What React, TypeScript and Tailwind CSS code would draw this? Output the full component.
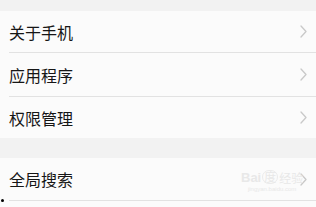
import React from "react";

function Chevron() {
  return (
    <svg width="7" height="13" viewBox="0 0 7 13" className="shrink-0">
      <path d="M1 1 L6 6.5 L1 12" fill="none" stroke="#c9c9c9" strokeWidth="1.3" strokeLinecap="round" strokeLinejoin="round" />
    </svg>
  );
}

function Row({ label, h, divider }: { label: string; h: string; divider?: boolean }) {
  return (
    <div className="bg-[#fbfbfb]">
      <div className={`flex items-center justify-between pl-[9px] pr-[9px] ${h}`}>
        <span className="text-[16px] leading-none text-[#161616]">{label}</span>
        <Chevron />
      </div>
      {divider && (
        <div className="pl-[9px]">
          <div className="h-px bg-[#e2e2e2]" />
        </div>
      )}
    </div>
  );
}

export default function App() {
  return (
    <div
      className="relative w-[316px] h-[207px] overflow-hidden bg-[#fbfbfb]"
      style={{ fontFamily: '"Noto Sans CJK SC", "Noto Sans", sans-serif' }}
    >
      <div className="h-[11px] bg-[#f2f2f2]" />
      <Row label="关于手机" h="h-[41px]" divider />
      <Row label="应用程序" h="h-[43px]" divider />
      <Row label="权限管理" h="h-[41px]" />
      <div className="h-[20px] bg-[#f2f2f2]" />
      <Row label="全局搜索" h="h-[42px]" divider />
      <div className="absolute left-[1px] top-[199px] w-[3px] h-[3px] rounded-full bg-black" />
      <div className="absolute left-[241px] top-[170px] flex flex-col items-center text-[#e8e8e8]">
        <div className="flex items-end leading-none">
          <span className="text-[13px] font-bold" style={{ fontFamily: '"Liberation Sans", sans-serif' }}>Bai</span>
          <span className="text-[12px] mx-[1px] border border-[#ebebeb] rounded-full px-[1px]">度</span>
          <span className="text-[12px]">经验</span>
        </div>
        <span className="text-[6px] leading-none mt-[2px]" style={{ fontFamily: '"Liberation Sans", sans-serif' }}>jingyan.baidu.com</span>
      </div>
    </div>
  );
}
